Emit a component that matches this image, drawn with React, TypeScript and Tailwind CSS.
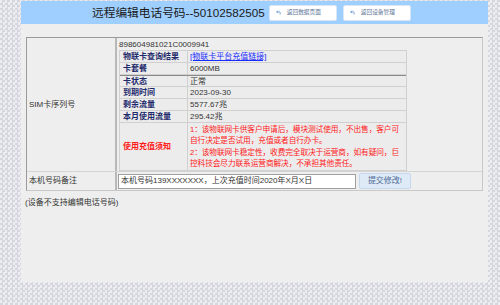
import { CornerUpLeft } from "lucide-react";

const font = { fontFamily: '"Liberation Sans", "Noto Sans CJK SC", sans-serif' };

const rows = [
  { label: "卡套餐", value: "6000MB" },
  { label: "卡状态", value: "正常", thick: true },
  { label: "到期时间", value: "2023-09-30" },
  { label: "剩余流量", value: "5577.67兆" },
  { label: "本月使用流量", value: "295.42兆" },
];

const notes = [
  "1：该物联网卡供客户申请后，模块测试使用，不出售，客户可",
  "自行决定是否试用，充值或者自行办卡。",
  "2：该物联网卡稳定性，收费完全取决于运营商，如有疑问，巨",
  "控科技会尽力联系运营商解决，不承担其他责任。",
];

function BackButton({ text }: { text: string }) {
  return (
    <button className="flex h-[16px] w-[68px] items-center gap-[6px] rounded-[2px] border border-[#d8e6f5] bg-white pl-[6px] text-[5.7px] text-[#5f7899]">
      <CornerUpLeft size={5} strokeWidth={3} className="text-[#3a78c8]" />
      <span>{text}</span>
    </button>
  );
}

export default function App() {
  return (
    <div
      className="h-[305px] w-[500px] overflow-hidden bg-[repeating-conic-gradient(#d6d6de_0_25%,#ededf1_0_50%)] bg-[length:5px_5px] text-[8px] text-[#333]"
      style={font}
    >
      <div className="ml-[21px] h-[281px] w-[467px] bg-[#eeeeee]">
        {/* Header */}
        <div className="mt-[1px] flex h-[23px] items-center bg-[#9fcfff] pl-[71px]">
          <span className="text-[11.7px] text-[#1a1a1a]">远程编辑电话号码--50102582505</span>
          <div className="ml-[4px] flex gap-[6px]">
            <BackButton text="返回数据页面" />
            <BackButton text="返回设备管理" />
          </div>
        </div>

        {/* Main table */}
        <div className="ml-[5px] mt-[13px] w-[457px] border-l border-t border-[#9a9a9a] border-b border-r border-b-[#c8c8c8] border-r-[#c8c8c8]">
          <div className="flex border-b border-[#d4d4d4]">
            <div className="flex w-[90px] items-center border-r-2 border-[#b8b8b8] pl-[2px]">SIM卡序列号</div>
            <div className="flex-1 pl-[2px] pt-[1px]">
              <div className="h-[11px] leading-[11px]">898604981021C0009941</div>
              <div className="w-[288px] border border-[#d0d0d0] bg-[#ececec]">
                <div className="flex h-[12px] border-b border-[#d0d0d0]">
                  <div className="w-[68px] border-r border-[#d0d0d0] pl-[3px] font-bold leading-[11px] text-[#1d2a6b]">物联卡查询结果</div>
                  <div className="pl-[2px] leading-[11px] text-[#1a2bff] underline">[物联卡平台充值链接]</div>
                </div>
                {rows.map((r) => (
                  <div
                    key={r.label}
                    className={`flex h-[12px] border-b ${r.thick ? "border-t border-t-[#8a8a8a]" : ""} border-b-[#d0d0d0]`}
                  >
                    <div className="w-[68px] border-r border-[#d0d0d0] pl-[3px] font-bold leading-[11px] text-[#1d2a6b]">{r.label}</div>
                    <div className="pl-[2px] leading-[11px]">{r.value}</div>
                  </div>
                ))}
                <div className="flex">
                  <div className="flex w-[68px] shrink-0 items-center border-r border-[#d0d0d0] pl-[3px] font-bold text-[#ff1a1a]">使用充值须知</div>
                  <div className="min-w-0 flex-1 whitespace-nowrap py-[1px] pl-[2px] text-[7.7px] leading-[11.3px] tracking-[-0.1px] text-[#ff1a1a]">
                    {notes.map((n) => (
                      <div key={n}>{n}</div>
                    ))}
                  </div>
                </div>
              </div>
            </div>
          </div>
          <div className="flex h-[18px]">
            <div className="flex w-[90px] items-center border-r-2 border-[#b8b8b8] pl-[2px]">本机号码备注</div>
            <div className="flex items-center pl-[1px]">
              <div className="flex h-[15px] w-[238px] items-center border border-[#a0a0a0] bg-white pl-[2px]">
                本机号码139XXXXXXX，上次充值时间2020年X月X日
              </div>
              <button className="ml-[3px] h-[16px] w-[52px] rounded-[2px] border border-[#c6d8ee] bg-[#dfeaf7] text-[8px] text-[#4d6a96]">
                提交修改!
              </button>
            </div>
          </div>
        </div>

        <div className="ml-[4px] mt-[6px]">(设备不支持编辑电话号码)</div>
      </div>
    </div>
  );
}
